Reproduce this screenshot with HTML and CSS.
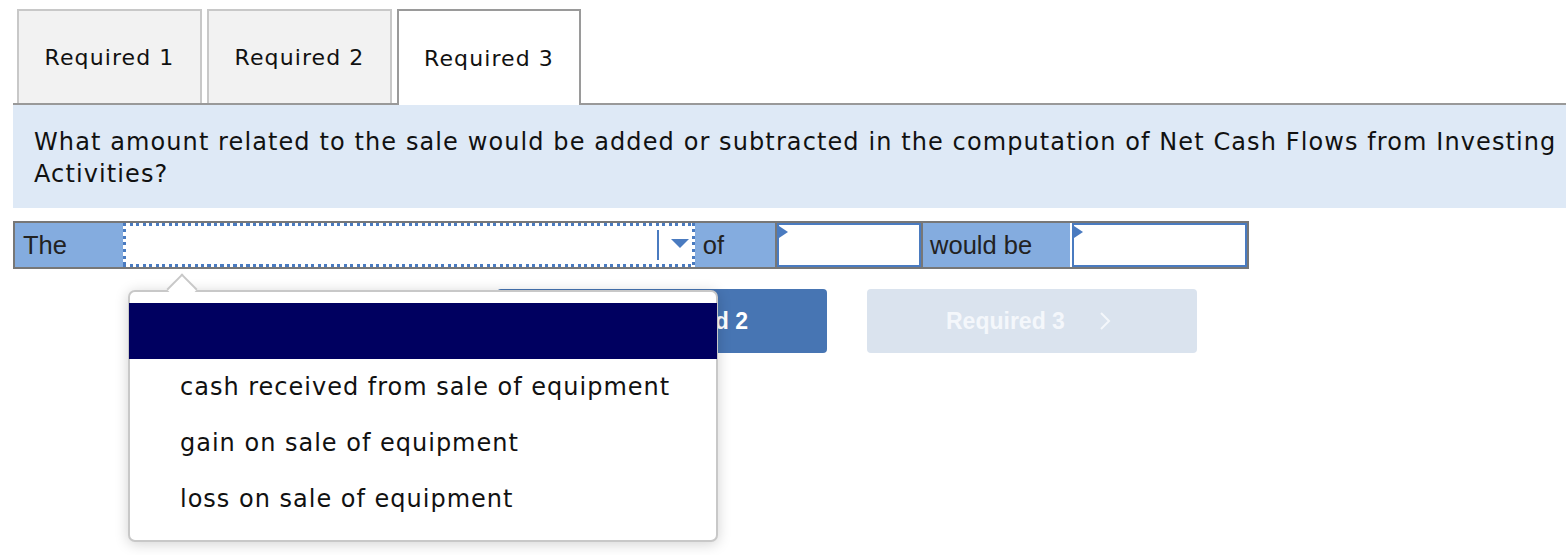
FILE: index.html
```html
<!DOCTYPE html>
<html>
<head>
<meta charset="utf-8">
<link rel="stylesheet" href="styles.css">
</head>
<body>
<div class="page">
  <div class="tabs">
    <div class="tab">Required 1</div>
    <div class="tab">Required 2</div>
    <div class="tab active">Required 3</div>
  </div>
  <div class="question">What amount related to the sale would be added or subtracted in the computation of Net Cash Flows from Investing Activities?</div>
  <div class="answer-row">
    <div class="cell label-the">The</div>
    <div class="select">
      <div class="select-sep"></div>
      <svg class="select-arrow" width="18" height="9" viewBox="0 0 18 9"><path d="M0 0 H18 L9 9 Z" fill="#4a7bc0"/></svg>
    </div>
    <div class="cell label-of">of</div>
    <div class="input input-1"><span class="flag"></span></div>
    <div class="cell label-would">would be</div>
    <div class="input input-2"><span class="flag"></span></div>
  </div>
  <div class="nav">
    <div class="btn btn-prev"><svg class="chev-prev" width="12" height="18" viewBox="0 0 12 18"><path d="M10 1 L2 9 L10 17" fill="none" stroke="#fff" stroke-width="2"/></svg>Required 2</div>
    <div class="btn btn-next">Required 3<svg class="chev-svg" width="12" height="18" viewBox="0 0 12 18"><path d="M2 1 L10 9 L2 17" fill="none" stroke="#f4f7fb" stroke-width="2"/></svg></div>
  </div>
  <div class="popup">
    <div class="caret"></div>
    <div class="opt selected"></div>
    <div class="opt">cash received from sale of equipment</div>
    <div class="opt">gain on sale of equipment</div>
    <div class="opt">loss on sale of equipment</div>
  </div>
</div>
</body>
</html>
```
FILE: styles.css
```css
html, body { margin: 0; padding: 0; background: #fff; }
.page {
  position: relative;
  padding-left: 13px;
  font-family: "DejaVu Sans", Verdana, sans-serif;
  color: #111;
  height: 555px;
  overflow: hidden;
}
.tabs {
  display: flex;
  gap: 5px;
  padding-left: 4px;
  padding-top: 9px;
  border-bottom: 2px solid #999;
  height: 94px;
}
.tab {
  width: 181px;
  height: 92px;
  border: 2px solid #c8c8c8;
  border-bottom: none;
  background: #f2f2f2;
  display: flex;
  align-items: center;
  justify-content: center;
  font-size: 22px;
  letter-spacing: 1.1px;
  padding-top: 0;
  box-sizing: content-box;
}
.tab.active {
  width: 180px;
  height: 94px;
  background: #fff;
  border-color: #9a9a9a;
  margin-bottom: -2px;
}
.question {
  background: #dee9f6;
  padding: 21px 0 18px 21px;
  font-size: 24px;
  letter-spacing: 1.1px;
  line-height: 32px;
  height: 64px;
  color: #111;
}
.answer-row {
  margin-top: 13px;
  display: flex;
  width: 1232px;
  height: 44px;
  border: 2px solid #777;
  font-family: "Liberation Sans", Arial, sans-serif;
  font-size: 25.5px;
  color: #222;
}
.cell {
  background: #84acdf;
  display: flex;
  align-items: center;
  padding-left: 8px;
  box-sizing: border-box;
}
.label-the { width: 108px; }
.label-of { width: 80px; padding-left: 8px; }
.label-would { width: 149px; border-left: 2px solid #777; padding-left: 7px; }
.select {
  position: relative;
  width: 574px;
  box-sizing: border-box;
  background:
    repeating-linear-gradient(to right, #4a7bc0 0 3px, transparent 3px 6.5px) top left / 100% 3px no-repeat,
    repeating-linear-gradient(to right, #4a7bc0 0 3px, transparent 3px 6.5px) bottom left / 100% 3px no-repeat,
    repeating-linear-gradient(to bottom, #4a7bc0 0 3px, transparent 3px 6.5px) top left / 3px 100% no-repeat,
    repeating-linear-gradient(to bottom, #4a7bc0 0 3px, transparent 3px 6.5px) top right / 3px 100% no-repeat,
    #fff;
}
.select-sep {
  position: absolute;
  left: 534px;
  top: 7px;
  bottom: 7px;
  width: 2px;
  background: #4a7bc0;
}
.select-arrow {
  position: absolute;
  left: 548px;
  top: 16px;
}
.input {
  position: relative;
  background: #fff;
  border: 2px solid #4a7bc0;
  box-sizing: border-box;
}
.input-1 { width: 145px; margin-left: 2px; box-shadow: -2px 0 0 #777; }
.input-2 { width: 176px; margin-left: 2px; }
.flag {
  position: absolute;
  left: 0;
  top: 1px;
  width: 0;
  height: 0;
  border-top: 6px solid transparent;
  border-bottom: 6px solid transparent;
  border-left: 9px solid #4a7bc0;
}
.nav {
  display: flex;
  gap: 40px;
  margin-top: 20px;
  padding-left: 484px;
}
.btn {
  width: 330px;
  height: 64px;
  border-radius: 4px;
  display: flex;
  align-items: center;
  font-family: "Liberation Sans", Arial, sans-serif;
  font-weight: bold;
  font-size: 23px;
  color: #fff;
  box-sizing: border-box;
}
.btn-prev {
  background: #4775b3;
  justify-content: flex-end;
  padding-right: 79px;
}
.chev-prev { margin-right: 34px; }
.btn-next {
  background: #dae3ee;
  color: #f4f7fb;
  padding-left: 79px;
}
.chev-svg { margin-left: 34px; }
.popup {
  position: absolute;
  left: 128px;
  top: 290px;
  width: 586px;
  padding: 11px 0 13px;
  background: #fff;
  border: 2px solid #c8c8c8;
  border-radius: 7px;
  box-shadow: 0 2px 14px rgba(0,0,0,0.18);
}
.caret {
  position: absolute;
  left: 41px;
  top: -14px;
  width: 20px;
  height: 20px;
  background: #fff;
  border-left: 2px solid #c8c8c8;
  border-top: 2px solid #c8c8c8;
  transform: rotate(45deg);
}
.opt {
  position: relative;
  height: 56px;
  line-height: 56px;
  padding-left: 50px;
  font-size: 24px;
  letter-spacing: 1px;
  color: #111;
  white-space: nowrap;
}
.opt.selected {
  background: #000060;
  margin: 0 -1px;
}
```
